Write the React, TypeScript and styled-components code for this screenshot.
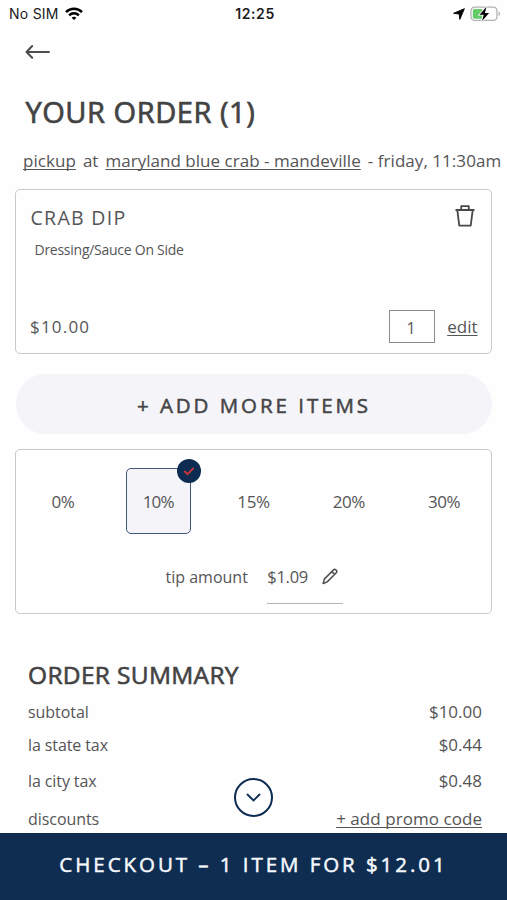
import React from "react";
import styled, { createGlobalStyle } from "styled-components";

const GlobalStyle = createGlobalStyle`
  * { box-sizing: border-box; }
  html, body { margin: 0; background: #fefefe; }
  button { font: inherit; color: inherit; border: 0; padding: 0; background: none; }
  svg { display: block; }
`;

const Screen = styled.main`
  position: relative;
  display: flex;
  flex-direction: column;
  width: 507px;
  height: 900px;
  overflow: hidden;
  background: #fefefe;
  color: #555556;
  font-family: "Open Sans", sans-serif;
`;

const Text = styled.span<{ $size?: number; $track?: number; $weight?: number }>`
  font-size: ${(p) => p.$size ?? 16}px;
  letter-spacing: ${(p) => p.$track ?? 0}px;
  font-weight: ${(p) => p.$weight ?? 400};
  white-space: nowrap;
`;

const ActionText = styled(Text)`
  -webkit-text-stroke: 0.5px currentColor;
`;

const Link = styled(Text)`
  text-decoration: underline;
  text-decoration-thickness: 1px;
  text-underline-offset: 2px;
  text-decoration-skip-ink: none;
`;

const StatusBar = styled.header`
  display: grid;
  grid-template-columns: 1fr auto 1fr;
  align-items: center;
  height: 27px;
  padding: 0 6px 0 9px;
  color: #1b1b1b;
  font-family: Inter, sans-serif;
`;

const StatusGroup = styled.div<{ $end?: boolean }>`
  display: flex;
  align-items: center;
  gap: 5px;
  justify-content: ${(p) => (p.$end ? "flex-end" : "flex-start")};
`;

const BackButton = styled.button`
  display: block;
  width: 26px;
  height: 16px;
  margin: 17px 0 0 25px;
`;

const Title = styled.h1`
  margin: 32px 0 0 25.5px;
  font-size: 29px;
  line-height: 40px;
  font-weight: 400;
  letter-spacing: 0.55px;
  -webkit-text-stroke: 0.7px currentColor;
  color: #434344;
  white-space: nowrap;
`;

const PickupLine = styled.p`
  display: flex;
  margin: 17px 0 0 23px;
  line-height: 24px;
  height: 24px;
  gap: 7px;
`;

const Card = styled.section<{ $top: number }>`
  display: flex;
  flex-direction: column;
  width: 477px;
  height: 165px;
  margin: ${(p) => p.$top}px 0 0 15px;
  border: 1.5px solid #c9c9c9;
  border-radius: 5px;
  flex: none;
`;

const ItemHead = styled.div`
  display: flex;
  justify-content: space-between;
  padding: 15px 16px 0 14.5px;
  line-height: 26px;
`;

const ItemNote = styled.div`
  padding: 7px 0 0 18.5px;
  line-height: 22px;
`;

const ItemFoot = styled.div`
  display: flex;
  align-items: center;
  height: 32px;
  margin: auto 13.5px 11px 14px;
`;

const Quantity = styled.div`
  width: 46px;
  height: 33px;
  margin: 0 12px 0 auto;
  padding: 2px 2px 0 0;
  border: 1.5px solid #8b8b8b;
  line-height: 31px;
  text-align: center;
`;

const AddButton = styled.button`
  display: flex;
  align-items: center;
  justify-content: center;
  flex: none;
  width: 476px;
  height: 60px;
  margin: 20px 0 0 16px;
  padding-top: 1px;
  border-radius: 30px;
  background: #f4f4f9;
  color: #454546;
`;

const TipOptions = styled.div`
  display: grid;
  grid-template-columns: repeat(5, 95.3px);
  justify-content: center;
  justify-items: center;
  margin-top: 18px;
`;

const TipOption = styled.button<{ $selected?: boolean }>`
  position: relative;
  width: 65px;
  height: 66px;
  padding-top: 1px;
  border: 1.5px solid ${(p) => (p.$selected ? "#3d5878" : "transparent")};
  border-radius: 5px;
  background: ${(p) => (p.$selected ? "#f4f4f9" : "transparent")};
`;

const Badge = styled.span`
  position: absolute;
  top: -10px;
  right: -11px;
  display: grid;
  place-items: center;
  width: 24px;
  height: 24px;
  border-radius: 50%;
  background: #0d2c52;
`;

const TipAmount = styled.div`
  display: flex;
  align-items: flex-start;
  margin: 31px 0 0 149.5px;
  gap: 19.5px;
  line-height: 24px;
`;

const TipInput = styled.div`
  display: flex;
  justify-content: space-between;
  width: 76px;
  height: 39px;
  padding-right: 5px;
  border-bottom: 1px solid #b5b5b5;
`;

const SummaryTitle = styled.h2`
  margin: 44px 0 0 28px;
  font-size: 24.5px;
  line-height: 34px;
  font-weight: 400;
  letter-spacing: 0.32px;
  -webkit-text-stroke: 0.6px currentColor;
  color: #434344;
  white-space: nowrap;
`;

const SummaryRow = styled.div<{ $height: number }>`
  display: flex;
  flex: none;
  align-items: flex-end;
  justify-content: space-between;
  height: ${(p) => p.$height}px;
  padding: 0 25px 0 28px;
  line-height: 22px;
`;

const ScrollButton = styled.button`
  position: absolute;
  left: 234px;
  top: 778px;
  display: grid;
  place-items: center;
  width: 39px;
  height: 39px;
  border: 2px solid #0d2c52;
  border-radius: 50%;
  background: #fefefe;
`;

const Checkout = styled.button`
  display: flex;
  justify-content: center;
  flex: none;
  height: 67px;
  margin-top: auto;
  background: #0e2d51;
  color: #f5f8fc;
  line-height: 62px;
`;

const WifiIcon = () => (
  <svg width="20" height="14" viewBox="0 0 18 14" fill="none" stroke="#000" strokeWidth="2.5">
    <path d="M1 5.2C5.5.7 12.5.7 17 5.2" />
    <path d="M4.1 8.3c2.8-2.7 7-2.7 9.8 0" />
    <path d="M6.6 10.7c1.4-1.2 3.4-1.2 4.8 0L9 13.1z" fill="#000" stroke="none" />
  </svg>
);

const LocationIcon = () => (
  <svg width="12" height="12" viewBox="0 0 12 12">
    <path d="M11.4.7 6.8 11.4 6.2 6.1.6 5.3z" fill="#000" stroke="#000" strokeWidth=".9" strokeLinejoin="round" />
  </svg>
);

const BatteryIcon = () => (
  <svg width="31" height="16" viewBox="0 0 31 16">
    <rect x="1" y="1.2" width="26" height="13.2" rx="3.6" fill="#fff" stroke="#b3b3b3" strokeWidth="1.3" />
    <path d="M28.6 5.5c1.9.8 1.9 3.8 0 4.6z" fill="#aaa" />
    <path d="M4.5 3h7.8v9.8H4.5A1.7 1.7 0 0 1 2.8 11V4.7A1.7 1.7 0 0 1 4.5 3z" fill="#65cb69" />
    <path d="m16.5.7-7 8.1h4.2l-1.6 6.3 7-8.1h-4.2z" fill="#000" stroke="#fff" strokeWidth="1.6" paintOrder="stroke" />
  </svg>
);

const BackIcon = () => (
  <svg width="26" height="16" viewBox="0 0 26 16" fill="none" stroke="#4d4d4d" strokeWidth="2" strokeLinecap="round" strokeLinejoin="round">
    <path d="M24 8H1.5M7.2 2 1.5 8l5.7 5.8" />
  </svg>
);

const TrashIcon = () => (
  <svg width="20" height="22" viewBox="0 0 20 22" fill="none" stroke="#484848" strokeWidth="1.8" strokeLinejoin="round">
    <path d="M0.5 5h19M6.2 4.8V1.2h7.6v3.6M2.3 5.2l2 15.4h11.4l2-15.4" />
  </svg>
);

const CheckIcon = () => (
  <svg width="12" height="10" viewBox="0 0 12 10" fill="none" stroke="#c9353b" strokeWidth="1.8">
    <path d="m1.3 5 3.2 3.2 6.3-6.4" />
  </svg>
);

const PencilIcon = () => (
  <svg width="16" height="24" viewBox="0 0 16 24" fill="none" stroke="#505050" strokeWidth="1.5" strokeLinejoin="round">
    <path d="M1.2 18.5l1.1-4.4L11.5 4.9c.7-.7 1.6-.7 2.3 0l.5.5c.7.7.7 1.6 0 2.3l-9.1 9.2zM9.8 6.6l2.8 2.8" />
  </svg>
);

const ChevronIcon = () => (
  <svg width="15" height="9" viewBox="0 0 15 9" fill="none" stroke="#0d2c52" strokeWidth="1.8" strokeLinecap="round">
    <path d="m1.5 1.5 6 6 6-6" />
  </svg>
);

const tips = ["0%", "10%", "15%", "20%", "30%"];

export default function App() {
  return (
    <Screen>
      <GlobalStyle />
      <StatusBar>
        <StatusGroup>
          <Text $size={14} $track={0.25}>No SIM</Text>
          <WifiIcon />
        </StatusGroup>
        <Text $size={14} $weight={600} $track={0.6}>12:25</Text>
        <StatusGroup $end>
          <LocationIcon />
          <BatteryIcon />
        </StatusGroup>
      </StatusBar>
      <BackButton aria-label="Back"><BackIcon /></BackButton>
      <Title>YOUR ORDER (1)</Title>
      <PickupLine>
        <Link $size={17} $track={0.05}>pickup</Link>
        <Text $size={17}>at</Text>
        <Link $size={17} $track={0.03}>maryland blue crab - mandeville</Link>
        <Text $size={17} $track={0.05}>- friday, 11:30am</Text>
      </PickupLine>

      <Card $top={16}>
        <ItemHead>
          <Text $size={19.5} $track={1.3}>CRAB DIP</Text>
          <TrashIcon />
        </ItemHead>
        <ItemNote><Text $size={14} $track={-0.26}>Dressing/Sauce On Side</Text></ItemNote>
        <ItemFoot>
          <Text $size={17} $track={1.2}>$10.00</Text>
          <Quantity><Text $size={16}>1</Text></Quantity>
          <Link $size={17}>edit</Link>
        </ItemFoot>
      </Card>

      <AddButton><ActionText $size={20.5} $track={2.95}>+ ADD MORE ITEMS</ActionText></AddButton>

      <Card $top={15}>
        <TipOptions>
          {tips.map((tip) => (
            <TipOption key={tip} $selected={tip === "10%"}>
              <Text $size={17} $track={tip === "10%" ? -0.9 : -0.4}>{tip}</Text>
              {tip === "10%" && <Badge><CheckIcon /></Badge>}
            </TipOption>
          ))}
        </TipOptions>
        <TipAmount>
          <Text $size={16}>tip amount</Text>
          <TipInput>
            <Text $size={16.5} $track={-0.3}>$1.09</Text>
            <PencilIcon />
          </TipInput>
        </TipAmount>
      </Card>

      <SummaryTitle>ORDER SUMMARY</SummaryTitle>
      <SummaryRow $height={31}><Text $track={-0.06}>subtotal</Text><Text $size={17}>$10.00</Text></SummaryRow>
      <SummaryRow $height={33}><Text $track={-0.1}>la state tax</Text><Text $size={17}>$0.44</Text></SummaryRow>
      <SummaryRow $height={36}><Text $track={-0.1}>la city tax</Text><Text $size={17}>$0.48</Text></SummaryRow>
      <SummaryRow $height={38}><Text $track={-0.06}>discounts</Text><Link $size={17} $track={0.05}>+ add promo code</Link></SummaryRow>

      <ScrollButton aria-label="Scroll down"><ChevronIcon /></ScrollButton>
      <Checkout><ActionText $size={20.5} $track={2.95}>CHECKOUT – 1 ITEM FOR $12.01</ActionText></Checkout>
    </Screen>
  );
}
